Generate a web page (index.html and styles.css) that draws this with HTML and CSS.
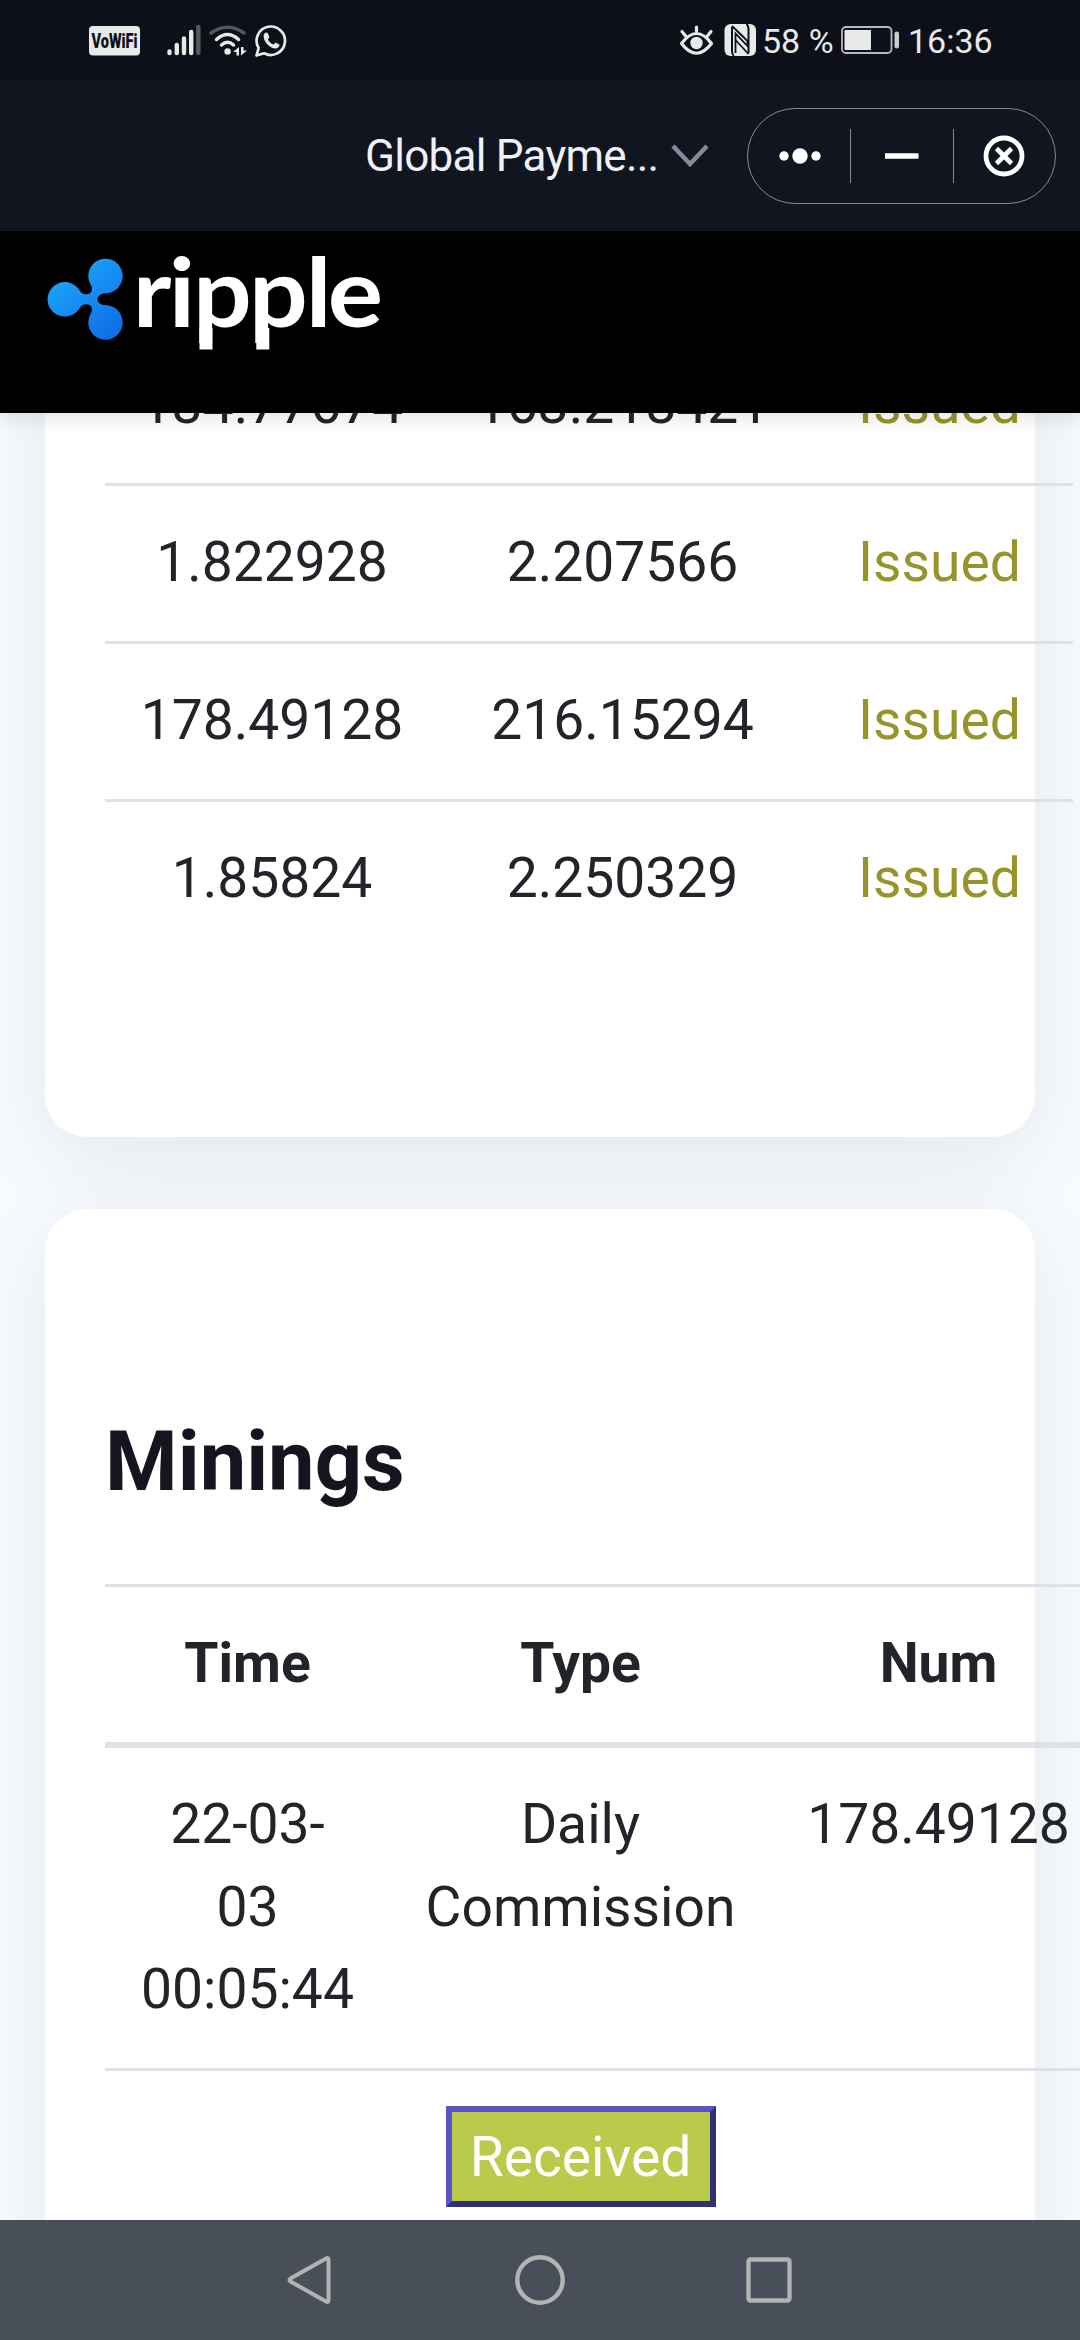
FILE: index.html
```html
<!DOCTYPE html>
<html lang="en">
<head>
<meta charset="utf-8">
<title>Global Payments</title>
<link rel="stylesheet" href="styles.css">
</head>
<body>
<div class="screen">
  <div class="status">
    <svg class="status-left" width="202" height="36" viewBox="88 24 202 36">
      <rect x="89" y="26" width="51" height="29.500" rx="4" fill="#e8e9e9"/>
      <text class="vowifi" transform="translate(91.500 47.800) scale(.86 1.180)" x="0" y="0" textLength="53.500" lengthAdjust="spacingAndGlyphs">VoWiFi</text>
      <g stroke="#e8e9e9" stroke-width="4.400" stroke-linecap="round">
        <path d="M169.500 51.500V53M176.800 45V53M184 38.500V53M191.200 32V53"/>
        <path d="M198.300 27V53" stroke="#57585b"/>
      </g>
      <g fill="none" stroke="#e8e9e9" stroke-width="3.400" stroke-linecap="round">
        <path d="M211 33Q227.500 21.500 244 33" stroke="#57585b"/>
        <path d="M216.500 39.500Q227.500 29.500 238.500 39.500"/>
        <path d="M221.500 45Q227.500 39.500 233.500 45"/>
      </g>
      <circle cx="227.600" cy="51.500" r="3.200" fill="#e8e9e9"/>
      <path d="M233 52L239 47V55.500H236.500V52ZM241 47V55.500L247 50.500H243.500V47Z" fill="#e8e9e9"/>
      <path d="M256.500 55.500L258.600 48A14.200 14.200 0 1 1 264.200 53.300Z" fill="none" stroke="#e8e9e9" stroke-width="2.700" stroke-linejoin="round"/>
      <path d="M263.800 34.500C265 32.200 267.200 31.800 267.800 33.200L269.300 36.700C269.600 37.600 268 38.800 267.900 39.500C269.200 42 271 43.500 273.300 44.500C274.200 44.500 275.200 42.600 276 42.800L279.300 44.500C280.200 45.200 278.500 48.300 275.700 48.600C269.500 48.300 262.500 41 263.800 34.500Z" fill="#e8e9e9"/>
    </svg>
    <svg class="status-icons" width="78" height="36" viewBox="678 24 78 36">
      <g fill="none" stroke="#e8e9e9" stroke-width="3.200" stroke-linecap="round">
        <path d="M680.500 43.500Q695.500 23.500 710.500 43.500Q695.500 63 680.500 43.500Z" stroke-linejoin="round"/>
        <path d="M681 31.500L685 36.500M695.500 27V31M710 31.500L706 36.500"/>
      </g>
      <circle cx="695.500" cy="43" r="6.200" fill="#e8e9e9"/>
      <rect x="723.500" y="24" width="31.500" height="32" rx="6" fill="#e8e9e9"/>
      <path d="M731 27V51Q731 54.500 733 56M747.500 53V29Q747.500 25.500 745.500 24" fill="none" stroke="#0d1018" stroke-width="2"/>
      <path d="M731 26L746.500 41V46L734.500 33.500V53" fill="none" stroke="#0d1018" stroke-width="1.800"/>
      <path d="M734.500 40L747.500 54" stroke="#0d1018" stroke-width="1.800"/>
    </svg>
    <span class="status-pct">58 %</span>
    <svg class="battery" width="60" height="30" viewBox="839 25.500 60 30">
      <rect x="841" y="27.500" width="49.500" height="26" rx="4" fill="none" stroke="#b9babd" stroke-width="1.800"/>
      <rect x="843.500" y="30.500" width="26.500" height="20" rx="1" fill="#e8e9e9"/>
      <rect x="893.500" y="32" width="4.500" height="17" rx="2" fill="#c9cacc"/>
    </svg>
    <span class="status-time">16:36</span>
  </div>

  <div class="titlebar">
    <span class="title">Global Payme...</span>
    <svg class="chevron" width="40" height="26" viewBox="0 0 40 26"><path d="M3 3L20 21L37 3" fill="none" stroke="#858a98" stroke-width="4.500"/></svg>
    <div class="capsule">
      <svg width="102" height="54" viewBox="0 0 102 54"><g fill="#fff"><circle cx="36" cy="27" r="4.700"/><circle cx="52" cy="27" r="7.700"/><circle cx="68" cy="27" r="4.700"/></g></svg>
      <i class="divider"></i>
      <svg width="102" height="54" viewBox="0 0 102 54"><path d="M34 27H67.500" stroke="#fff" stroke-width="5.500"/></svg>
      <i class="divider"></i>
      <svg width="101" height="54" viewBox="0 0 101 54"><g fill="none" stroke="#fff" stroke-width="4.800"><circle cx="50" cy="27" r="18"/><path d="M42.500 19.500L57.500 34.500M57.500 19.500L42.500 34.500"/></g></svg>
    </div>
  </div>

  <header class="site-header">
    <svg class="logo" width="334" height="95" viewBox="46 255 334 95">
      <defs>
        <linearGradient id="drop" gradientUnits="userSpaceOnUse" x1="60" y1="270" x2="112" y2="335">
          <stop offset="0" stop-color="#1ba6fb"/><stop offset="1" stop-color="#0f6fe6"/>
        </linearGradient>
      </defs>
      <g fill="url(#drop)">
        <circle cx="64.800" cy="299.300" r="17.200"/>
        <circle cx="105.500" cy="276" r="17.200"/>
        <circle cx="105.500" cy="322.500" r="17.200"/>
        <path d="M76 286.500C80 291 81.500 294.300 86 294.300C91 294.300 93 291 91.500 286L90 281L109 293C103 292.300 97.500 295 97.500 299.300C97.500 303.500 103 306.200 109 305.500L90 317.500L91.500 312.500C93 307.500 91 304.300 86 304.300C81.500 304.300 80 307.500 76 312Z"/>
      </g>
      <text class="wordmark" transform="translate(0 326.700) scale(1.090 1)" x="121.800 154.800 177 228.500 280.500 300.800" y="0">ripple</text>
      <path d="M199.500 328H212.500V349.500H199.500ZM256.300 328H269.300V349.500H256.300Z" fill="#fff"/>
    </svg>
  </header>

  <main class="content">
    <section class="card card-issued">
      <table class="table issued">
        <colgroup><col class="c334"><col class="c367"><col class="c267"></colgroup>
        <tbody>
          <tr><td>134.77674</td><td>163.218421</td><td class="ok">Issued</td></tr>
          <tr><td>1.822928</td><td>2.207566</td><td class="ok">Issued</td></tr>
          <tr><td>178.49128</td><td>216.15294</td><td class="ok">Issued</td></tr>
          <tr><td>1.85824</td><td>2.250329</td><td class="ok">Issued</td></tr>
        </tbody>
      </table>
    </section>
    <section class="card card-minings">
      <h2>Minings</h2>
      <table class="table minings">
        <colgroup><col class="c285"><col class="c381"><col class="c335"></colgroup>
        <thead><tr><th>Time</th><th>Type</th><th>Num</th></tr></thead>
        <tbody>
          <tr><td>22-03-<br>03<br>00:05:44</td><td>Daily<br>Commission</td><td>178.49128</td></tr>
          <tr><td></td><td><button class="received">Received</button></td><td></td></tr>
        </tbody>
      </table>
    </section>
  </main>

  <nav class="navbar">
    <svg width="50" height="60" viewBox="0 0 50 60"><path d="M40 8.500Q42.500 7 42.500 10V50Q42.500 53 40 51.500L4.500 31.500Q2.500 30 4.500 28.500Z" fill="none" stroke="#b3b3b3" stroke-width="4"/></svg>
    <svg width="50" height="60" viewBox="0 0 50 60"><circle cx="25" cy="30" r="22.700" fill="none" stroke="#b3b3b3" stroke-width="4.400"/></svg>
    <svg width="50" height="60" viewBox="0 0 50 60"><rect x="4.500" y="9.500" width="41" height="41" rx="2" fill="none" stroke="#b3b3b3" stroke-width="4.300"/></svg>
  </nav>
</div>
</body>
</html>
```
FILE: styles.css
```css
* { box-sizing: border-box; }
body { margin: 0; font-family: Roboto, sans-serif; }
svg { display: block; flex: none; }

.screen {
  width: 1080px;
  height: 2340px;
  overflow: hidden;
  display: flex;
  flex-direction: column;
  background: #f7fbff;
}
.status, .titlebar, .site-header, .navbar { flex: none; position: relative; z-index: 2; }

.status {
  height: 80px;
  display: flex;
  align-items: flex-start;
  padding: 24px 0 0 88px;
  background: #0d1018;
  color: #e8e9e9;
  font-size: 34px;
  line-height: 34px;
  white-space: nowrap;
}
.vowifi { font: 900 17px Roboto, sans-serif; fill: #0d1018; }
.status-icons { margin-left: 389px; }
.status-pct { width: 78px; margin-left: 5px; }
.battery { margin-top: 1px; }
.status-time { margin-left: 8px; }

.titlebar {
  height: 151px;
  display: flex;
  align-items: center;
  padding-left: 365px;
  background: #11151f;
}
.title { width: 304px; font-size: 44px; line-height: 52px; letter-spacing: -.75px; color: #f0f1f6; white-space: nowrap; }
.chevron { margin-left: 1px; }
.capsule {
  width: 309px;
  height: 96px;
  margin-left: 37px;
  display: flex;
  align-items: center;
  border: 1px solid #858997;
  border-radius: 48px;
}
.divider { width: 1px; height: 54px; background: #858997; }

.site-header {
  height: 182px;
  padding: 24px 0 0 46px;
  background: #000;
  box-shadow: 0 6px 18px rgba(0, 0, 0, .1);
}
.logo { overflow: visible; }
.wordmark { font: 700 95px Lato, sans-serif; fill: #fff; }

.content { flex: 1; min-height: 0; padding: 0 45px; }
.card {
  padding: 0 60px;
  border-radius: 42px;
  background: #fff;
  box-shadow: 0 24px 90px rgba(0, 0, 0, .08);
}
.card-issued { height: 952px; margin-top: -228px; padding-top: 140px; }
.card-minings { height: 1300px; margin-top: 72px; padding-top: 203px; }
h2 { margin: 0; height: 172px; font-size: 83px; line-height: 100px; font-weight: 700; color: #17131f; }

.table {
  table-layout: fixed;
  border-collapse: separate;
  border-spacing: 0;
  color: #212529;
  font-size: 55.200px;
  line-height: 82.660px;
  text-align: center;
}
.issued { width: 968px; }
.minings { width: 1001px; }
.c334 { width: 334px; } .c367 { width: 367px; } .c267 { width: 267px; }
.c285 { width: 285px; } .c381 { width: 381px; } .c335 { width: 335px; }
td, th { padding: 35px 0 36px; vertical-align: top; border-top: 3px solid #dee2e6; }
.issued tr { height: 158px; }
th { height: 164px; border-bottom: 6px solid #dee2e6; }
tbody .ok { color: #96942a; }
.minings tbody tr:first-child td { border-top: 0; height: 320px; }

.received {
  display: block;
  width: 270px;
  height: 101px;
  margin: 0 auto;
  padding: 0;
  border: 6px solid;
  border-color: #5a54cb #332f73 #332f73 #5a54cb;
  background: #bacb4b;
  color: #fff;
  font: 55.200px/82px Roboto, sans-serif;
}

.navbar {
  height: 120px;
  display: flex;
  justify-content: center;
  align-items: center;
  gap: 179px;
  background: #494f59;
}
```
